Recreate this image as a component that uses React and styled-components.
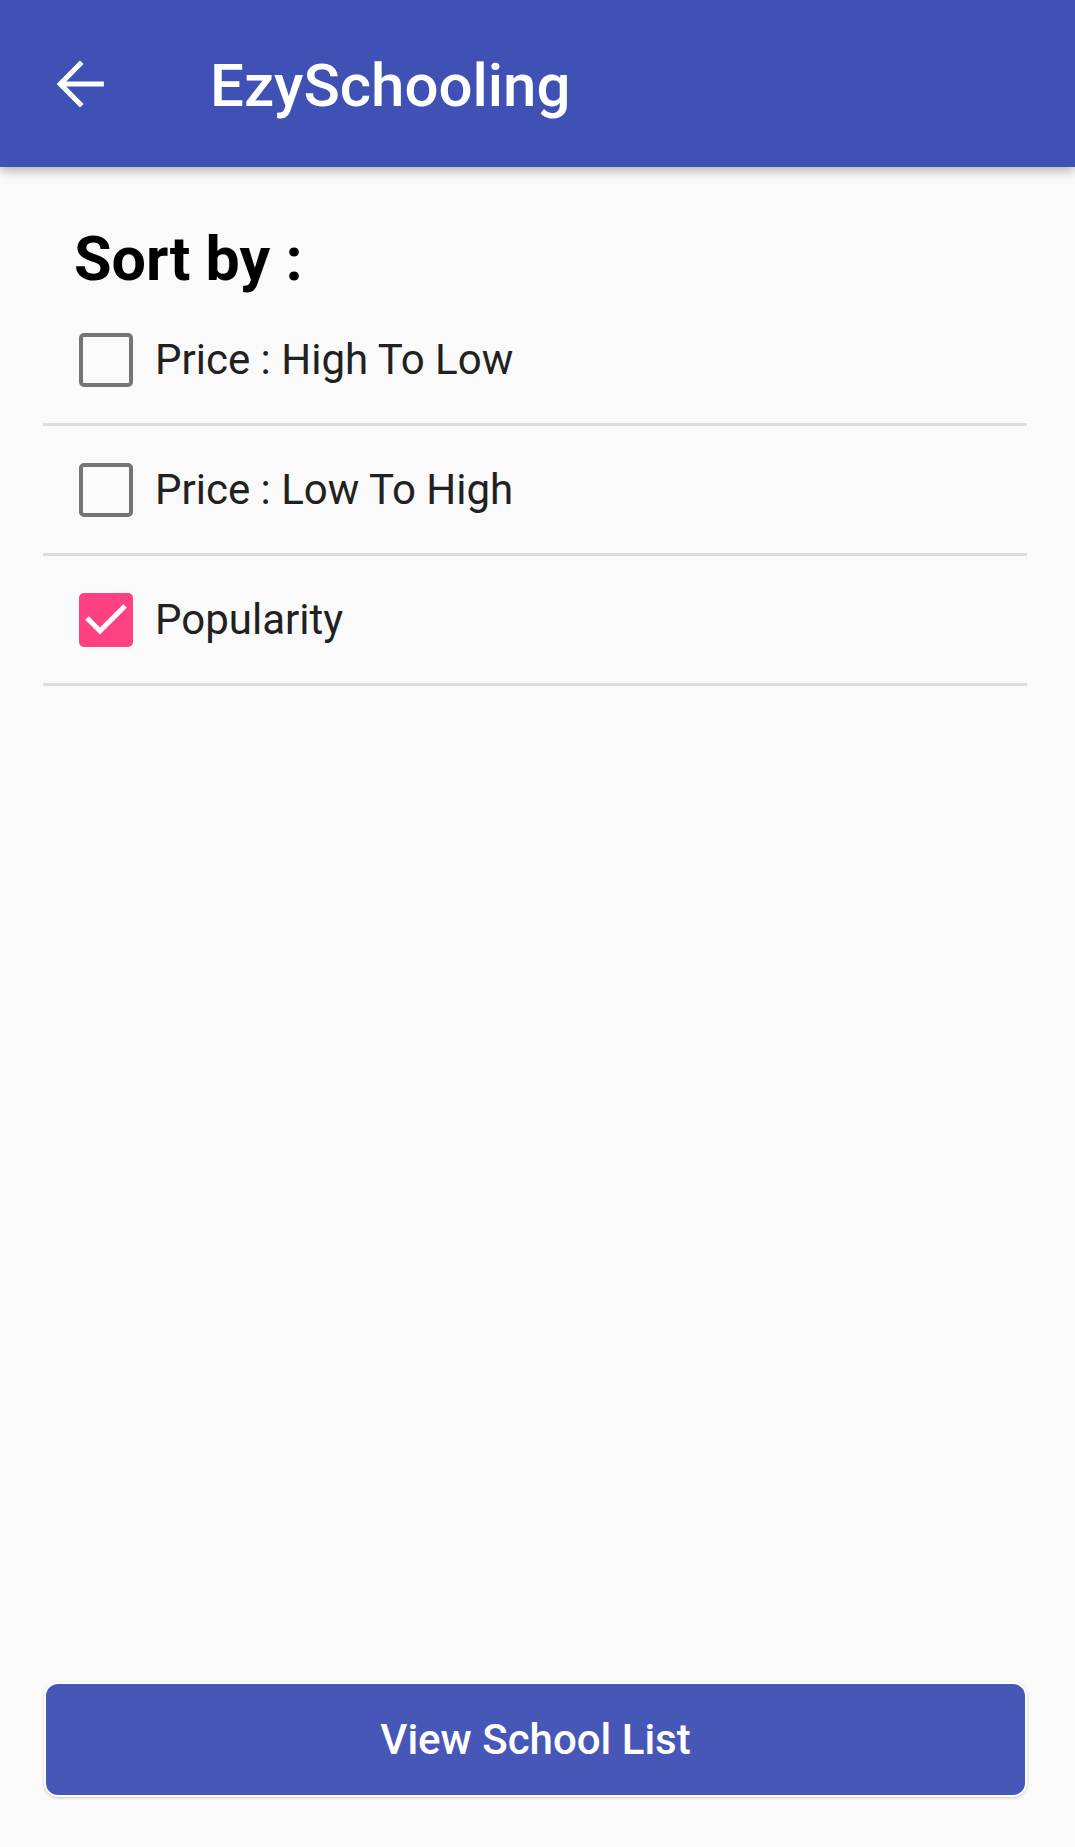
import styled, { createGlobalStyle } from "styled-components";

const GlobalStyle = createGlobalStyle`
  body {
    margin: 0;
    background: #fafafa;
    font-family: Roboto, "Noto Sans", sans-serif;
  }
`;

const options = [
  { label: "Price : High To Low", checked: false },
  { label: "Price : Low To High", checked: false },
  { label: "Popularity", checked: true },
];

const BackArrow = () => (
  <svg width="64" height="64" viewBox="0 0 24 24" fill="none">
    <path
      d="M20 12H5M12 4.5L4.6 12L12 19.5"
      stroke="#fff"
      strokeWidth="1.9"
      strokeLinecap="square"
    />
  </svg>
);

const CheckMark = () => (
  <svg width="54" height="54" viewBox="0 0 54 54">
    <polyline
      points="8,25 21,38 46,13"
      fill="none"
      stroke="#fff"
      strokeWidth="5"
    />
  </svg>
);

export default function App() {
  return (
    <>
      <GlobalStyle />
      <Page>
        <Toolbar>
          <IconButton type="button">
            <BackArrow />
          </IconButton>
          <Title>EzySchooling</Title>
        </Toolbar>
        <Content>
          <Heading>Sort by :</Heading>
          {options.map((opt) => (
            <Row key={opt.label}>
              <Box checked={opt.checked}>{opt.checked && <CheckMark />}</Box>
              <Label>{opt.label}</Label>
            </Row>
          ))}
          <Footer>
            <Button type="button">View School List</Button>
          </Footer>
        </Content>
      </Page>
    </>
  );
}

const Page = styled.div`
  display: flex;
  flex-direction: column;
  min-height: 1847px;
  background: #fafafa;
`;

const Toolbar = styled.header`
  display: flex;
  align-items: center;
  height: 167px;
  padding-left: 48px;
  background: #3f51b5;
  box-shadow: 0 4px 10px rgba(0, 0, 0, 0.28);
  position: relative;
  z-index: 1;
`;

const IconButton = styled.button`
  display: flex;
  padding: 0;
  border: none;
  background: none;
`;

const Title = styled.h1`
  margin: 0 0 0 98px;
  padding-top: 4px;
  color: #fff;
  font-size: 60px;
  line-height: 60px;
  font-weight: 500;
`;

const Content = styled.main`
  flex: 1;
  display: flex;
  flex-direction: column;
  padding: 0 48px 50px 43px;
`;

const Heading = styled.h2`
  margin: 59px 0 4px 31px;
  font-size: 61px;
  line-height: 66px;
  font-weight: 700;
  color: #000;
`;

const Row = styled.label`
  display: flex;
  align-items: center;
  height: 127px;
  padding-left: 36px;
  border-bottom: 3px solid #dddddd;
`;

const Box = styled.span`
  box-sizing: border-box;
  display: flex;
  width: 54px;
  height: 54px;
  border-radius: 5px;
  border: ${(p) => (p.checked ? "none" : "4.5px solid #757575")};
  background: ${(p) => (p.checked ? "#ff4081" : "transparent")};
`;

const Label = styled.span`
  margin-left: 22px;
  font-size: 42px;
  color: #212121;
`;

const Footer = styled.div`
  margin-top: auto;
`;

const Button = styled.button`
  display: block;
  width: 983px;
  height: 115px;
  margin-left: 1px;
  border: 2px solid #fff;
  border-radius: 14px;
  background: #4757b8;
  color: #fff;
  font-family: Roboto, sans-serif;
  font-size: 42px;
  font-weight: 500;
  box-shadow: 0 1px 3px rgba(0, 0, 0, 0.2);
`;
